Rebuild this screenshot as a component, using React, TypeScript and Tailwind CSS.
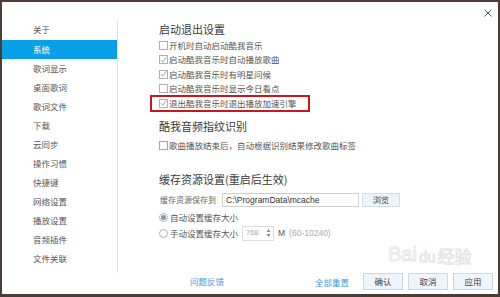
import React from 'react';

const FONT = '"Noto Sans CJK SC", "Noto Sans", sans-serif';

const NAV = ['关于', '系统', '歌词显示', '桌面歌词', '歌词文件', '下载', '云同步', '操作习惯', '快捷键', '网络设置', '播放设置', '音频插件', '文件关联'];

const STARTUP = [
    { label: '开机时自动启动酷我音乐', checked: false },
    { label: '启动酷我音乐时自动播放歌曲', checked: true },
    { label: '启动酷我音乐时有明星问候', checked: true },
    { label: '启动酷我音乐时显示今日看点', checked: false },
    { label: '退出酷我音乐时退出播放加速引擎', checked: true, marked: true },
];

const Check = ({ checked, blue }: { checked: boolean; blue?: boolean }) => (
    <span className={`w-[9px] h-[9px] border ${blue ? 'border-[#7fb0dc]' : 'border-[#b0b0b0]'} bg-white flex items-center justify-center shrink-0`}>
        {checked && (
            <svg width="8" height="8" viewBox="0 0 8 8">
                <path d="M1 4.2 L3.1 6.5 L7.2 0.8" fill="none" stroke="#8299b0" strokeWidth="1" />
            </svg>
        )}
    </span>
);

const Radio = ({ on }: { on: boolean }) => (
    <span className="w-[9px] h-[9px] rounded-full border border-[#b0b0b0] bg-white flex items-center justify-center shrink-0">
        {on && <span className="w-[5px] h-[5px] rounded-full bg-[#8094ab]" />}
    </span>
);

const Heading = ({ children, className = '' }: { children: React.ReactNode; className?: string }) => (
    <div className={`h-[18px] flex items-center text-[11px] text-[#3a3a3a] ${className}`}>{children}</div>
);

const Button = ({ children }: { children: React.ReactNode }) => (
    <button className="w-[40px] h-[17px] border border-[#c9d7e6] bg-[#eef5fc] text-[8.5px] text-[#444] flex items-center justify-center">
        {children}
    </button>
);

export default function App() {
    return (
        <div className="w-[500px] h-[297px] bg-[#4b3c36] pt-[2px] pl-[2px] overflow-hidden" style={{ fontFamily: FONT }}>
            <div className="w-[496px] h-[292px] bg-white flex flex-col relative">
                {/* title bar */}
                <div className="h-[18px] flex justify-end items-center pr-[6px] pt-[4px]">
                    <svg width="8" height="8" viewBox="0 0 8 8">
                        <path d="M0.5 0.5 L7.5 7.5 M7.5 0.5 L0.5 7.5" stroke="#555" strokeWidth="1" />
                    </svg>
                </div>

                <div className="flex h-[253px]">
                    {/* sidebar */}
                    <div className="w-[116px] border-r border-[#e2e2e2] flex flex-col">
                        {NAV.map((item, i) => (
                            <div
                                key={item}
                                className={`h-[19px] flex items-center pl-[31px] text-[8.5px] ${i === 1 ? 'bg-[#0aa0e7] text-white h-[18px] my-[0.5px]' : 'text-[#585858]'}`}
                            >
                                {item}
                            </div>
                        ))}
                    </div>

                    {/* content */}
                    <div className="flex-1 pl-[41px] flex flex-col">
                        <Heading>启动退出设置</Heading>
                        {STARTUP.map((row) => (
                            <div key={row.label} className="relative h-[14.5px] flex items-center gap-[1px] text-[8.5px] text-[#555]">
                                <Check checked={row.checked} />
                                <span>{row.label}</span>
                                {row.marked && (
                                    <span className="absolute left-[-9px] top-[-1.5px] w-[160px] h-[17px] border-2 border-[#c8171e]" />
                                )}
                            </div>
                        ))}

                        <Heading className="mt-[6.5px]">酷我音频指纹识别</Heading>
                        <div className="h-[14.5px] mt-[3.5px] flex items-center gap-[1px] text-[8.5px] text-[#555]">
                            <Check checked={false} blue />
                            <span>歌曲播放结束后，自动根据识别结果修改歌曲标签</span>
                        </div>

                        <Heading className="mt-[17px]">缓存资源设置(重启后生效)</Heading>
                        <div className="h-[14px] mt-[5px] flex items-center">
                            <span className="text-[8px] text-[#666] w-[63px] pl-[1px]">缓存资源保存到</span>
                            <div className="w-[137px] h-[14px] border border-[#cfcfcf] flex items-center pl-[3px] text-[8.5px] text-[#333]" style={{ fontFamily: '"Liberation Sans", sans-serif' }}>
                                C:\ProgramData\mcache
                            </div>
                            <button className="ml-[3px] w-[38px] h-[14px] border border-[#d3dde8] bg-[#eef4fb] text-[8px] text-[#444] flex items-center justify-center">
                                浏览
                            </button>
                        </div>
                        <div className="h-[14px] mt-[3px] flex items-center gap-[2px] text-[8.5px] text-[#555]">
                            <Radio on />
                            <span>自动设置缓存大小</span>
                        </div>
                        <div className="h-[15px] mt-[1.5px] flex items-center text-[8.5px] text-[#555]">
                            <Radio on={false} />
                            <span className="ml-[2px]">手动设置缓存大小</span>
                            <div className="ml-[4px] w-[32px] h-[15px] border border-[#dcdcdc] flex items-center justify-between pl-[3px] pr-[2px]">
                                <span className="text-[7.5px] text-[#aaa]" style={{ fontFamily: '"Liberation Sans", sans-serif' }}>768</span>
                                <svg width="5" height="10" viewBox="0 0 5 10">
                                    <path d="M2.5 1 L4.5 4 L0.5 4 Z M2.5 9 L4.5 6 L0.5 6 Z" fill="#888" />
                                </svg>
                            </div>
                            <span className="ml-[4px] text-[8.5px] text-[#555]" style={{ fontFamily: '"Liberation Sans", sans-serif' }}>M</span>
                            <span className="ml-[4px] text-[8.5px] text-[#aaa]" style={{ fontFamily: '"Liberation Sans", sans-serif' }}>(60-10240)</span>
                        </div>
                    </div>
                </div>

                {/* footer */}
                <div className="h-[17px] flex items-center">
                    <span className="ml-[188px] text-[8.5px] text-[#3a9ee0]">问题反馈</span>
                    <div className="ml-auto flex items-center pr-[5px]">
                        <span className="text-[8.5px] text-[#3a9ee0] mr-[14px] mt-[2px]">全部重置</span>
                        <div className="flex gap-[5px]">
                            <Button>确认</Button>
                            <Button>取消</Button>
                            <Button>应用</Button>
                        </div>
                    </div>
                </div>

                {/* watermark */}
                <div className="absolute left-[386px] top-[242px] flex items-end gap-[2px] text-[20px] leading-none text-transparent [-webkit-text-stroke:1px_#e6e6e6] pointer-events-none" style={{ fontFamily: '"Liberation Sans", sans-serif' }}>
                    <span>Bai</span>
                    <span className="text-[15px]">du</span>
                    <span className="text-[17px]" style={{ fontFamily: FONT }}>经验</span>
                </div>
            </div>
        </div>
    );
}
